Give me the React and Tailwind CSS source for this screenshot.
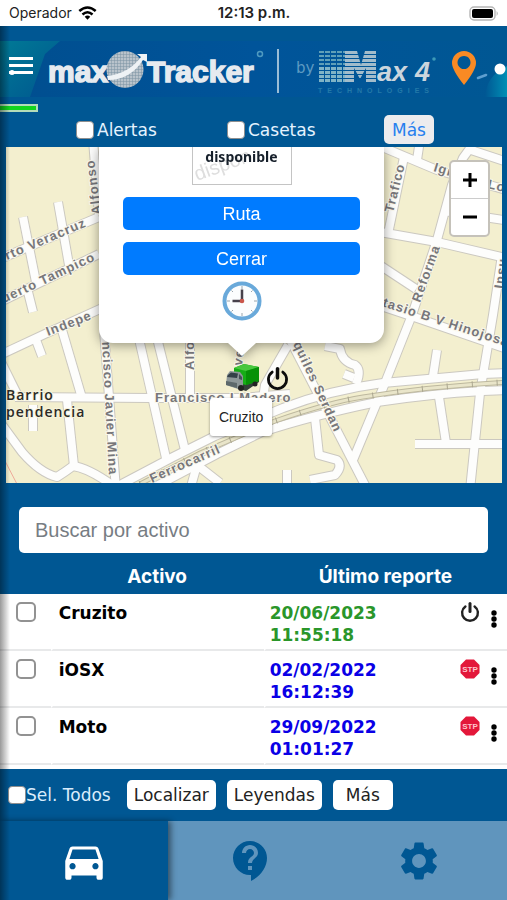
import React from "react";
import { MdContactSupport, MdDirectionsCar, MdSettings } from "react-icons/md";

const roads = [
  "M0 259 L99 217",
  "M0 302 L99 254",
  "M23 217 L36 282",
  "M28 292 L33 312",
  "M58 202 L69 265",
  "M93 140 L99 215",
  "M0 355 L47 333 L120 300",
  "M36 340 L42 356",
  "M62 330 L82 398",
  "M0 360 L18 396",
  "M15 397 L150 398 L240 398 L290 394",
  "M104 330 L116 490",
  "M137 330 L166 458",
  "M155 330 L185 450",
  "M190 330 L190 396",
  "M0 422 L22 452 Q40 473 57 477 Q65 472 73 466 Q88 468 112 485",
  "M67 400 L74 466",
  "M33 405 L33 431",
  "M118 486 L173 457 L215 436 L283 408 Q330 390 383 383 L483 374 L510 373",
  "M130 500 L217 454 L262 432 Q310 416 377 402 Q430 394 483 391 L510 390",
  "M190 490 L197 465 L220 483",
  "M285 330 L366 487",
  "M288 345 L265 385 L262 405",
  "M325 346 L340 349 Q342 362 355 365 Q362 370 356 384",
  "M344 374 L354 378",
  "M476 140 L463 158 L452 185 L437 240 L412 315 L383 388 L353 460",
  "M404 157 L388 234",
  "M375 144 L437 170 L510 191",
  "M420 140 L417 160",
  "M468 149 L510 163",
  "M380 232 L437 242 L510 259",
  "M444 211 L510 221",
  "M375 262 L416 289",
  "M375 304 L420 319 L510 350",
  "M502 255 L493 315 L480 393 L470 490",
  "M437 350 L433 376",
  "M439 397 L446 443",
  "M415 444 L510 444",
  "M315 418 L319 455 L337 460 Q343 466 335 475 L310 480",
  "M287 470 L287 490",
];

const streetLabels = [
  { x: 7, y: 260, angle: -23, text: "rto Veracruz" },
  { x: 4, y: 303, angle: -25, text: "uerto Tampico" },
  { x: 48, y: 336, angle: -21, text: "Indepe" },
  { x: 102, y: 342, angle: 87, text: "ncisco Javier Mina" },
  { x: 194, y: 370, angle: -90, text: "Alfo" },
  { x: 101, y: 214, angle: -97, text: "Alfonso" },
  { x: 155, y: 402, angle: 0, text: "Francisco I Madero" },
  { x: 152, y: 483, angle: -24, text: "Ferrocarril" },
  { x: 293, y: 344, angle: 65, text: "quiles Serdan" },
  { x: 393, y: 213, angle: -76, text: "Trafico" },
  { x: 433, y: 171, angle: 17, text: "Ign" },
  { x: 487, y: 188, angle: 13, text: "Lo" },
  { x: 420, y: 303, angle: -70, text: "Reforma" },
  { x: 382, y: 306, angle: 18, text: "tasio B V Hinojosa" },
  { x: 503, y: 289, angle: -82, text: "Insu" },
  { x: 242, y: 366, angle: -83, text: "ve" },
];

const assets = [
  { name: "Cruzito", date: "20/06/2023", time: "11:55:18", color: "text-[#2a962a]", status: "power" },
  { name: "iOSX", date: "02/02/2022", time: "16:12:39", color: "text-[#0a00e6]", status: "stop" },
  { name: "Moto", date: "29/09/2022", time: "01:01:27", color: "text-[#0a00e6]", status: "stop" },
];

function PowerIcon({ className, color = "#111" }) {
  return (
    <svg viewBox="0 0 20 20" className={className} fill="none" stroke={color} strokeLinecap="round" aria-hidden="true">
      <path d="M5.4 4.4 A7.9 7.9 0 1 0 14.6 4.4" strokeWidth="2.4" />
      <path d="M10 1.6 V9.6" strokeWidth="3" />
    </svg>
  );
}

function StopIcon() {
  return (
    <svg viewBox="0 0 20 20" className="size-5" role="img" aria-label="STP">
      <path d="M6 .5 H14 L19.5 6 V14 L14 19.5 H6 L.5 14 V6 Z" fill="#e3173a" />
      <text x="10" y="13" textAnchor="middle" fontSize="8" fontWeight="700" fill="#ffc4cb" fontFamily="Liberation Sans, sans-serif">
        STP
      </text>
    </svg>
  );
}

function StatusBar() {
  return (
    <div className="grid h-[26px] grid-cols-3 items-center bg-white pr-2 pl-[9px] font-['Inter',sans-serif] text-sm text-[#222]">
      <div className="flex items-center gap-[6px]">
        <span>Operador</span>
        <svg viewBox="0 0 20 15" className="h-[14px] w-[19px]" fill="none" stroke="#000" strokeWidth="2.7" aria-hidden="true">
          <path d="M1.2 5.4 Q10 -2.2 18.8 5.4" />
          <path d="M4.6 9.1 Q10 4.4 15.4 9.1" />
          <path d="M7 11.6 Q10 8.8 13 11.6 L10 14.8 Z" fill="#000" stroke="none" />
        </svg>
      </div>
      <div className="text-center text-[15px] font-semibold whitespace-nowrap">12:13 p.m.</div>
      <svg viewBox="0 0 30 15" className="h-[15px] w-[30px] justify-self-end" aria-hidden="true">
        <rect x="1" y="1" width="25" height="13" rx="4" fill="#fff" stroke="#b5b5b5" strokeWidth="1.4" />
        <rect x="3" y="3" width="21" height="9" rx="2" fill="#000" />
        <path d="M27.6 5 Q30 7.5 27.6 10 Z" fill="#b5b5b5" />
      </svg>
    </div>
  );
}

function Banner() {
  return (
    <div className="flex h-14 items-center bg-linear-to-r from-[#004e8f] via-[#00549a] to-[#005793]">
      <svg viewBox="0 41 507 56" className="h-14 w-full" role="img" aria-label="max Tracker by Max4 Technologies">
        <defs>
          <linearGradient id="teal" x1="0" y1="0" x2="1" y2="1">
            <stop offset="0" stopColor="#007a96" />
            <stop offset="1" stopColor="#00568f" />
          </linearGradient>
          <linearGradient id="glow" x1="0" y1="0" x2="1" y2="0">
            <stop offset="0" stopColor="#005793" />
            <stop offset="1" stopColor="#008fb5" />
          </linearGradient>
          <pattern id="mesh" width="3" height="3" patternUnits="userSpaceOnUse">
            <rect width="3" height="3" fill="#b9c3cb" />
            <path d="M0 0 H3 M0 0 V3" stroke="#7c93a4" strokeWidth="1" />
          </pattern>
          <pattern id="bars" x="319" y="51" width="6" height="4" patternUnits="userSpaceOnUse">
            <rect width="5" height="2" fill="#5f9fb8" />
          </pattern>
          <pattern id="slats" x="319" y="51" width="6" height="4" patternUnits="userSpaceOnUse">
            <rect width="5" height="3" fill="#7fb3c6" />
          </pattern>
          <pattern id="lines" x="350" y="51" width="4" height="4" patternUnits="userSpaceOnUse">
            <rect width="4" height="3" fill="#a3bccb" />
          </pattern>
        </defs>
        <path d="M0 41 H60 L45 54 L30 97 H0 Z" fill="url(#teal)" />
        <path d="M485 97 Q486 76 507 66 V97 Z" fill="url(#glow)" />
        <g fill="#fff">
          <rect x="9" y="57" width="24" height="3" />
          <rect x="9" y="64" width="24" height="3" />
          <rect x="9" y="71" width="24" height="3" />
          <circle cx="12" cy="72.500" r="2.500" />
        </g>
        <g fill="#e6eaef" stroke="#e6eaef" strokeWidth="1.500" fontFamily="Liberation Sans, sans-serif" fontWeight="700">
          <text x="48" y="82" fontSize="30">max</text>
          <text x="147" y="82" fontSize="30">Tracker</text>
        </g>
        <circle cx="125" cy="69.500" r="18.500" fill="url(#mesh)" />
        <path d="M107 76 Q128 74 141 57 L137 54 L147 54 L147 62 L143 60 Q130 80 108 80 Z" fill="#eef2f5" />
        <circle cx="260" cy="54" r="2.500" fill="none" stroke="#4e9ac0" strokeWidth="1.500" />
        <rect x="277" y="49" width="2" height="44" fill="#9bbdd6" />
        <text x="296" y="73" fontSize="15" fill="#5d9ac2" fontFamily="DejaVu Sans, sans-serif">by</text>
        <rect x="319" y="51" width="30" height="16" fill="url(#bars)" />
        <rect x="319" y="67" width="30" height="15" fill="url(#slats)" />
        <path d="M345 51 H357 L361 65 L365 51 H376 V82 H366 V68 L360 79 L354 68 V82 H345 Z" fill="url(#lines)" />
        <text x="377" y="81" fontSize="27" fontStyle="italic" fontWeight="700" fill="#cbd5dd" fontFamily="Liberation Sans, sans-serif">ax</text>
        <text x="415" y="81" fontSize="27" fontStyle="italic" fontWeight="700" fill="#cbd5dd" fontFamily="Liberation Sans, sans-serif">4</text>
        <circle cx="434" cy="59" r="1.800" fill="#3c9ab8" />
        <text x="318" y="93" fontSize="7" fontWeight="700" letterSpacing="5" fill="#2379a8" fontFamily="Liberation Sans, sans-serif">TECHNOLOGIES</text>
        <path fillRule="evenodd" d="M464 51 a12 12 0 0 1 12 12 Q476 70 464 85 Q452 70 452 63 A12 12 0 0 1 464 51 Z M464 56 a6.500 6.500 0 1 0 .01 0 Z" fill="#f98a24" />
        <path d="M478 78 L486 75" stroke="#5f9fd0" strokeWidth="2.500" strokeLinecap="round" />
        <circle cx="500" cy="69" r="5.500" fill="#fff" />
      </svg>
    </div>
  );
}

function Truck() {
  return (
    <svg viewBox="0 0 36 30" className="h-[30px] w-9" role="img" aria-label="Cruzito">
      <path d="M4 22 L22 28 L35 19 V16 L20 20 Z" fill="#333f38" />
      <path d="M10 5 L20 1 L35 4 V18 L22 22 L10 19 Z" fill="#16ad16" />
      <path d="M10 5 L20 1 L35 4 L22 8 Z" fill="#48c83e" />
      <path d="M22 8 L35 4 V18 L22 22 Z" fill="#079107" />
      <path d="M3 12 L6 8 L16 9 L19 13 V24 L14 26 L2 22 Z" fill="#8d9798" />
      <path d="M4 12 L7 9.500 L14 10.500 L13 15 L3 14 Z" fill="#344048" />
      <path d="M15 11 L18 14 V17 L15 16 Z" fill="#465158" />
      <path d="M2 18 L13 20 V25 L2 22 Z" fill="#5d696b" />
      <circle cx="17" cy="25" r="3" fill="#222" />
      <circle cx="31" cy="21" r="2.500" fill="#222" />
    </svg>
  );
}

function StreetMap() {
  return (
    <svg viewBox="6 147 496 336" preserveAspectRatio="xMidYMid slice" className="block h-full w-full" role="img" aria-label="Mapa">
      <rect x="0" y="140" width="520" height="350" fill="#f3efcf" />
      <g fill="none" stroke="#cbc8c0" strokeWidth="10" strokeLinejoin="round">
        {roads.map((d) => <path key={d} d={d} />)}
      </g>
      <g fill="none" stroke="#fdfdfc" strokeWidth="8" strokeLinejoin="round">
        {roads.map((d) => <path key={d} d={d} />)}
      </g>
      <g fill="none">
        <path d="M140 484 L200 453 L275 421 Q330 402 363 397 Q430 386 510 382" stroke="#bdb89e" strokeWidth="5" />
        <path d="M140 484 L200 453 L275 421 Q330 402 363 397 Q430 386 510 382" stroke="#e9e5c9" strokeWidth="3" />
        <path d="M140 484 L200 453 L275 421 Q330 402 363 397 Q430 386 510 382" stroke="#aaa68f" strokeWidth="6" strokeDasharray="1 24" />
        <path d="M4 459 L18 486" stroke="#eeaa9a" />
      </g>
      <g fontFamily="Liberation Sans, sans-serif" fontSize="13" fontWeight="700" letterSpacing="1" fill="#77767a" stroke="#faf8ec" strokeWidth="2" paintOrder="stroke">
        {streetLabels.map(({ x, y, angle, text }) => (
          <text key={text} transform={`translate(${x} ${y}) rotate(${angle})`}>{text}</text>
        ))}
      </g>
      <g fontFamily="Open Sans, sans-serif" fontSize="14" fontWeight="600" letterSpacing="1" fill="#2b2a26" stroke="#f6f3dc" strokeWidth="2" paintOrder="stroke">
        <text x="6" y="400">Barrio</text>
        <text x="6" y="417">pendencia</text>
      </g>
    </svg>
  );
}

function MapPanel() {
  return (
    <section className="relative mr-[5px] ml-[6px] h-[336px] overflow-hidden font-['Liberation_Sans',sans-serif]">
      <StreetMap />

      <div className="absolute top-[216px] left-[218px]"><Truck /></div>
      <PowerIcon className="absolute top-[220px] left-[260px] size-[23px]" color="#0c0c0c" />
      <div className="absolute top-[251px] left-[204px] rounded-[3px] bg-white px-[9px] py-2 text-sm leading-[22px] text-[#222] shadow-[0_1px_3px_rgba(0,0,0,0.4)]">
        Cruzito
      </div>

      <div className="absolute top-0 left-[93px] w-[285px] drop-shadow-[0_2px_6px_rgba(0,0,0,0.4)]">
        <div className="flex flex-col items-center rounded-b-[14px] bg-white px-6 pb-[22px]">
          <div className="relative flex h-[38px] w-[100px] justify-center overflow-hidden border border-t-0 border-[#c4c4c4]">
            <svg viewBox="0 0 98 37" className="absolute inset-0 h-full w-full" aria-hidden="true">
              <text x="4" y="34" fontSize="20" fill="#dedede" transform="rotate(-20 4 34)">dispon</text>
            </svg>
            <span className="relative font-['Noto_Sans',sans-serif] text-sm leading-5 font-bold text-[#17202b]">disponible</span>
          </div>
          <button type="button" className="mt-3 h-[33px] w-full rounded-[5px] bg-[#007bff] text-lg text-white">Ruta</button>
          <button type="button" className="mt-3 h-[33px] w-full rounded-[5px] bg-[#007bff] text-lg text-white">Cerrar</button>
          <button type="button" aria-label="Historial" className="mt-[6px]">
            <svg viewBox="0 0 40 40" className="size-10" aria-hidden="true">
              <circle cx="20" cy="20" r="17.500" fill="#fbfdfe" stroke="#69a9da" strokeWidth="4" />
              <path d="M20 5 V8 M20 32 V35 M5 20 H8 M32 20 H35 M9.500 9.500 L11 11 M30.500 9.500 L29 11 M9.500 30.500 L11 29 M30.500 30.500 L29 29" stroke="#9aa5ad" />
              <path d="M20 8.500 V20 M20 20 H10.500" stroke="#46414b" strokeWidth="2.500" />
              <circle cx="20" cy="20" r="2.300" fill="#c9564b" />
            </svg>
          </button>
        </div>
        <svg viewBox="0 0 28 14" className="mx-auto block h-[14px] w-7" aria-hidden="true">
          <path d="M0 0 H28 L14 13 Z" fill="#fff" />
        </svg>
      </div>

      <div className="absolute top-[13px] right-[12px] flex w-[41px] flex-col overflow-hidden rounded-[5px] border-2 border-[#c5c2ba] bg-white">
        <button type="button" aria-label="Acercar" className="flex h-[37px] items-center justify-center border-b border-[#ccc]">
          <svg viewBox="0 0 16 16" className="size-4" aria-hidden="true"><path d="M8 1 V15 M1 8 H15" stroke="#000" strokeWidth="3" /></svg>
        </button>
        <button type="button" aria-label="Alejar" className="flex h-[36px] items-center justify-center">
          <svg viewBox="0 0 16 16" className="size-4" aria-hidden="true"><path d="M1 8 H15" stroke="#000" strokeWidth="3" /></svg>
        </button>
      </div>
    </section>
  );
}

const boxClass =
  "size-[18px] shrink-0 appearance-none rounded-[4px] border border-[#8e8e8e] bg-white checked:bg-[#007bff]";

function AssetRow({ asset }) {
  return (
    <tr className="h-[57px] align-top">
      <td className="border-b-2 border-[#e8e9ea] pt-2 pl-4">
        <input type="checkbox" aria-label={asset.name} className="block size-5 appearance-none rounded-[5px] border-2 border-[#929292] bg-white checked:bg-[#007bff]" />
      </td>
      <td className="border-b-2 border-l-2 border-b-[#e8e9ea] border-l-white pt-2 pl-[6px]">{asset.name}</td>
      <td className={"border-b-2 border-l-2 border-b-[#e8e9ea] border-l-white pt-2 pl-1 " + asset.color}>
        {asset.date}
        <br />
        {asset.time}
      </td>
      <td className="border-b-2 border-[#e8e9ea] pt-2 pr-[10px]">
        <div className="flex items-start justify-end gap-[11px]">
          {asset.status === "power" ? <PowerIcon className="size-5" color="#222" /> : <StopIcon />}
          <button type="button" aria-label={"Opciones de " + asset.name} className="pt-2">
            <svg viewBox="0 0 6 18" className="h-[18px] w-[6px]" aria-hidden="true">
              <circle cx="3" cy="3" r="2.700" /><circle cx="3" cy="9" r="2.700" /><circle cx="3" cy="15" r="2.700" />
            </svg>
          </button>
        </div>
      </td>
    </tr>
  );
}

export default function App() {
  const footerButton = "h-[30px] rounded-[5px] bg-white px-[7px] text-[#222]";
  return (
    <div className="flex min-h-screen flex-col bg-[#005793] font-['DejaVu_Sans',sans-serif] text-[17px] leading-[22px]">
      <StatusBar />
      <div className="relative flex grow flex-col">
        <header className="pt-[15px]">
          <Banner />
          <div className="mt-[7px] h-2 w-[38px] border-2 border-l-0 border-[#b3dcb9] bg-[#12d51e]" />
          <div className="grid h-[35px] grid-cols-3 items-center text-[#e5f3ff]">
            <div className="pl-[76px]">
              <label className="flex items-center gap-[3px]">
                <input type="checkbox" className={boxClass} />
                Alertas
              </label>
            </div>
            <div className="pl-[58px]">
              <label className="flex items-center gap-[3px]">
                <input type="checkbox" className={boxClass} />
                Casetas
              </label>
            </div>
            <div className="pl-[46px]">
              <button type="button" className="h-[29px] rounded-[5px] bg-[#ececee] px-2 text-[#2680ee]">Más</button>
            </div>
          </div>
        </header>

        <MapPanel />

        <main>
          <div className="px-[19px] pt-6 pb-[7px]">
            <input
              type="search"
              aria-label="Buscar por activo"
              placeholder="Buscar por activo"
              className="block h-[46px] w-full rounded-[5px] bg-white px-4 font-['Liberation_Sans',sans-serif] text-[20px] text-[#495057] placeholder:text-[#777d83]"
            />
          </div>
          <table className="w-full table-fixed border-separate border-spacing-0">
            <colgroup>
              <col className="w-[10%]" />
              <col className="w-[42%]" />
              <col className="w-[34%]" />
              <col className="w-[14%]" />
            </colgroup>
            <thead>
              <tr className="h-[34px] font-['Inter',sans-serif] text-[19px] text-white">
                <th />
                <th>Activo</th>
                <th colSpan={2}>Último reporte</th>
              </tr>
            </thead>
            <tbody className="bg-white font-bold text-black">
              {assets.map((asset) => <AssetRow key={asset.name} asset={asset} />)}
            </tbody>
          </table>
          <div className="h-1 bg-white" />
          <div className="flex h-[52px] items-center gap-[11px] pl-2 text-[#d9ecfc]">
            <label className="flex items-center pr-[5px] whitespace-nowrap">
              <input type="checkbox" className={boxClass} />
              Sel. Todos
            </label>
            <button type="button" className={footerButton}>Localizar</button>
            <button type="button" className={footerButton}>Leyendas</button>
            <button type="button" className="h-[30px] rounded-[5px] bg-white px-[13px] text-[#222]">Más</button>
          </div>
        </main>

        <nav className="grid grow grid-cols-3 bg-[#6095bd] pr-1">
          <button type="button" aria-label="Vehículos" className="flex items-center justify-center bg-[#005793] text-white shadow-[3px_0_6px_rgba(0,0,0,0.45)]">
            <MdDirectionsCar className="size-[50px]" />
          </button>
          <button type="button" aria-label="Ayuda" className="flex items-center justify-center text-[#005793]">
            <MdContactSupport className="size-12" />
          </button>
          <button type="button" aria-label="Ajustes" className="flex items-center justify-center text-[#005793]">
            <MdSettings className="size-[46px]" />
          </button>
        </nav>
        <div className="pointer-events-none absolute inset-y-0 left-0 w-[10px] bg-linear-to-r from-black/40 to-transparent" />
      </div>
    </div>
  );
}
